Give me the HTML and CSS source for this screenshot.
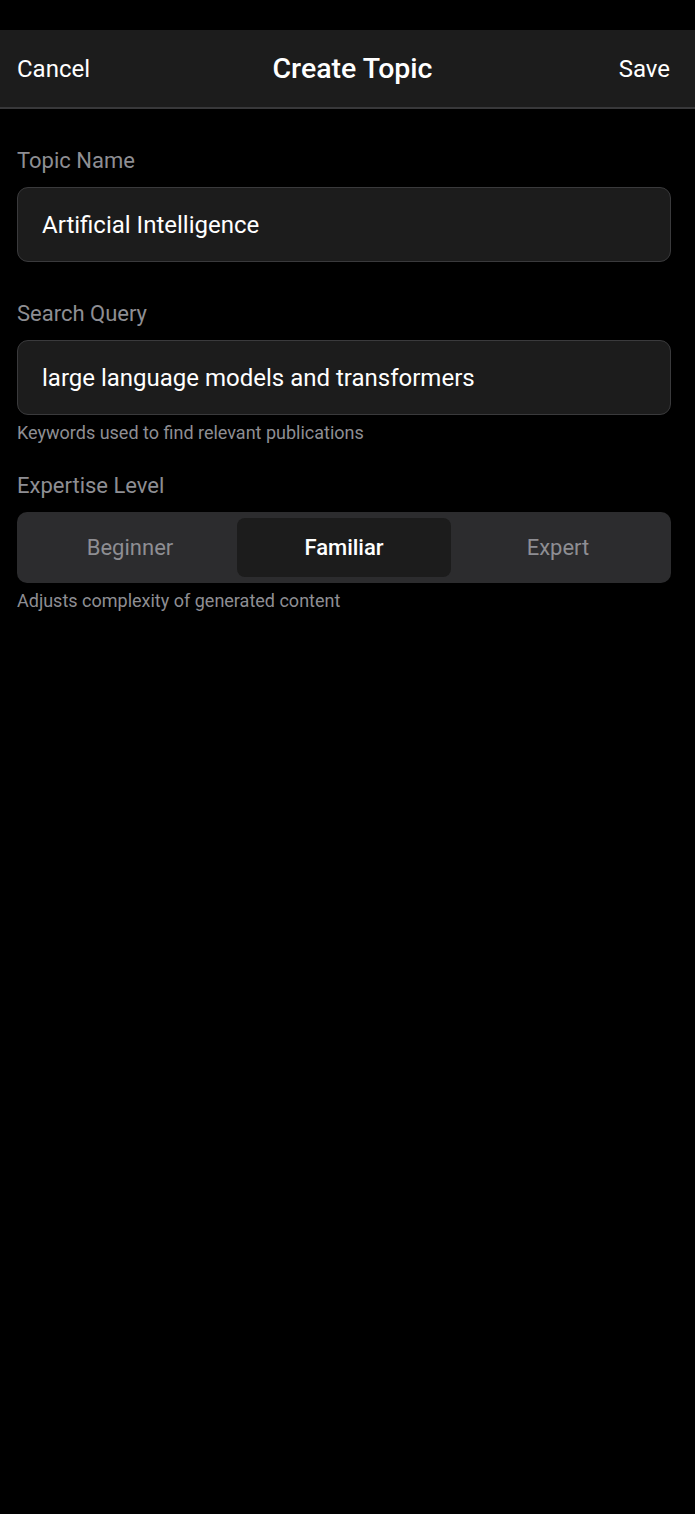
FILE: index.html
```html
<!DOCTYPE html>
<html lang="en">
<head>
  <meta charset="UTF-8">
  <meta name="viewport" content="width=device-width, initial-scale=1.0">
  <title>Create Topic</title>
  <link rel="stylesheet" href="styles.css">
</head>
<body>
  <div class="status-bar"></div>

  <header class="nav-bar">
    <span class="nav-btn">Cancel</span>
    <h1 class="nav-title">Create Topic</h1>
    <span class="nav-btn nav-save">Save</span>
  </header>

  <main class="form">
    <div class="field field-plain">
      <label class="field-label">Topic Name</label>
      <div class="input">Artificial Intelligence</div>
    </div>

    <div class="field">
      <label class="field-label">Search Query</label>
      <div class="input">large language models and transformers</div>
      <p class="hint">Keywords used to find relevant publications</p>
    </div>

    <div class="field">
      <label class="field-label">Expertise Level</label>
      <div class="segmented">
        <span class="segment">Beginner</span>
        <span class="segment active">Familiar</span>
        <span class="segment">Expert</span>
      </div>
      <p class="hint">Adjusts complexity of generated content</p>
    </div>
  </main>
</body>
</html>
```

FILE: styles.css
```css
body {
  margin: 0;
  background: #000;
  color: #fff;
  font-family: 'Roboto', 'Liberation Sans', sans-serif;
  min-height: 1514px;
}
.status-bar {
  height: 30px;
}
.nav-bar {
  height: 77px;
  background: #1c1c1c;
  border-bottom: 2px solid #38383a;
  display: flex;
  align-items: center;
  justify-content: space-between;
  padding: 0 25px 0 17px;
  position: relative;
}
.nav-btn {
  font-size: 24px;
  color: #fff;
}
.nav-title {
  position: absolute;
  left: 10px;
  right: 0;
  text-align: center;
  margin: 0;
  font-size: 28.5px;
  font-weight: 500;
  pointer-events: none;
}
.form {
  padding: 39px 24px 0 17px;
}
.field {
  margin-bottom: 30px;
}
.field-plain {
  margin-bottom: 39px;
}
.field-label {
  display: block;
  font-size: 22px;
  line-height: 26px;
  color: #8e8e93;
  margin-bottom: 13px;
}
.input {
  height: 75px;
  box-sizing: border-box;
  background: #1c1c1c;
  border: 1.5px solid #3a3a3c;
  border-radius: 11px;
  padding: 0 24px;
  display: flex;
  align-items: center;
  font-size: 24px;
}
.hint {
  margin: 7px 0 0;
  font-size: 18px;
  line-height: 21px;
  color: #8e8e93;
}
.segmented {
  display: flex;
  background: #2c2c2e;
  border-radius: 10px;
  padding: 6px;
  height: 71px;
  box-sizing: border-box;
}
.segment {
  flex: 1;
  display: flex;
  align-items: center;
  justify-content: center;
  font-size: 22px;
  color: #8e8e93;
  border-radius: 8px;
}
.segment.active {
  background: #1c1c1c;
  color: #fff;
  font-weight: 500;
}
```
